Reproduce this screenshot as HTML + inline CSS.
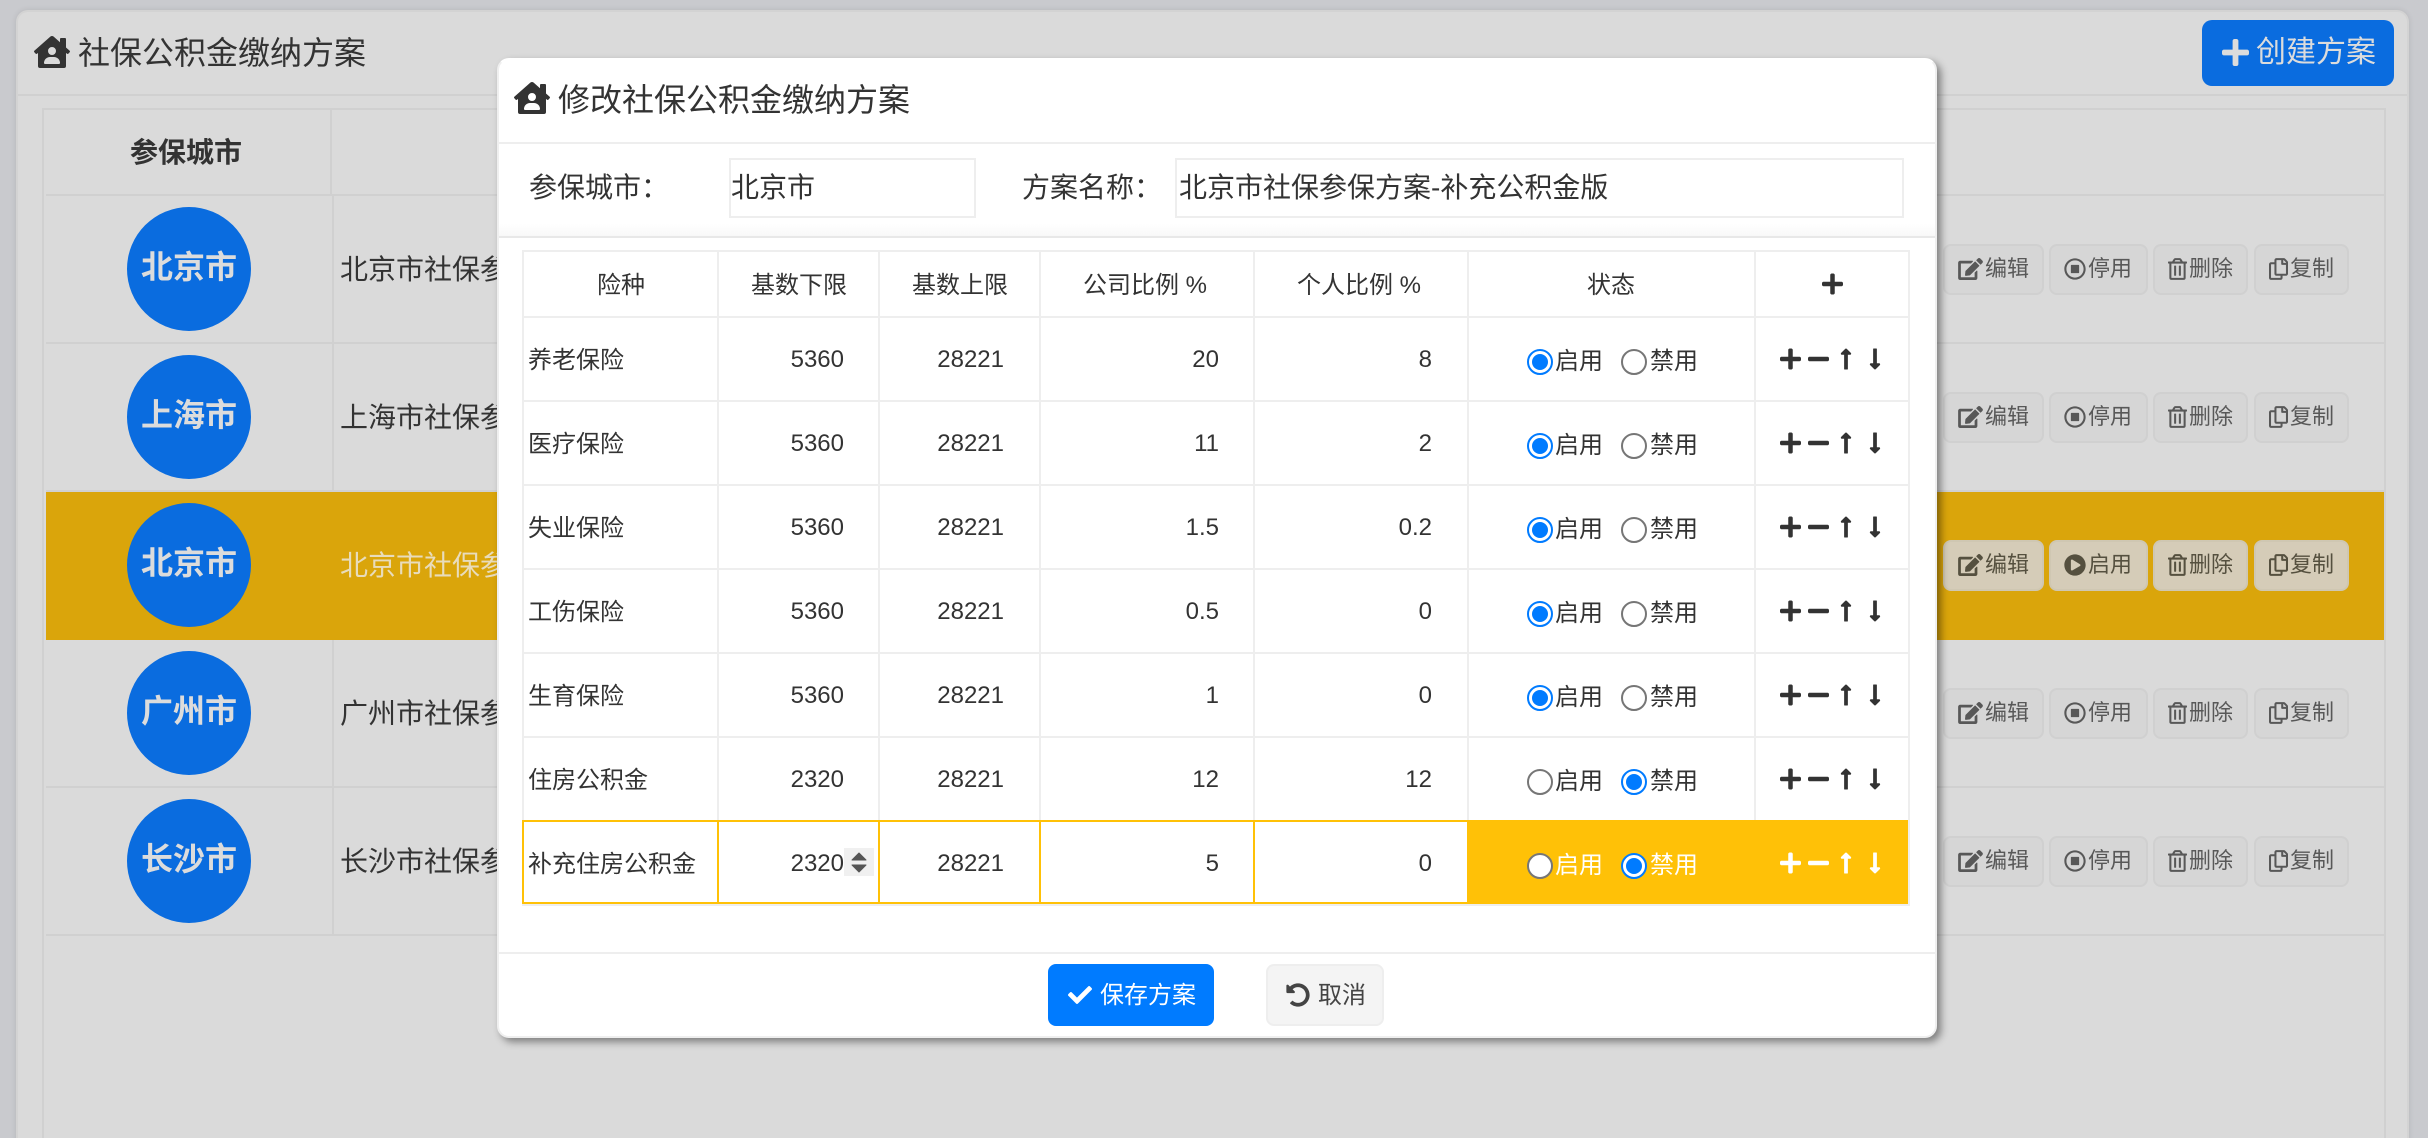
<!DOCTYPE html>
<html lang="zh"><head><meta charset="utf-8"><title>社保公积金缴纳方案</title>
<style>
html,body{margin:0;padding:0;width:2428px;height:1138px;overflow:hidden;background:#c9cace}
body{position:relative;font-family:"Liberation Sans","Noto Sans CJK SC",sans-serif;color:#333}
div,span,svg{position:absolute;box-sizing:border-box}
.t{white-space:nowrap;line-height:1}
.l{background:#d0d0d0}.m{background:#eee}
.y{background:#ffc107}
#panel{left:18px;top:12px;width:2389px;height:1140px;background:#dadada;border-radius:10px 10px 0 0;box-shadow:0 0 0 2px #d3d3d3,0 0 6px 2px rgba(0,0,0,.1)}
#modal{left:497px;top:58px;width:1440px;height:980px;background:#fff;border-radius:12px;border:2px solid #efefef;border-top-color:#fff;box-shadow:4px 4px 8px rgba(0,0,0,.42)}
.c{width:124px;height:124px;left:127px;border-radius:50%;background:#0a6cdf}
.ct{left:141px;width:96px;font-size:32px;font-weight:bold;color:#dcdcdc;text-align:center}
.rt{left:340px;font-size:28px;color:#333}
.b{top:0;height:51px;background:#d6d6d6;border:2px solid #d0d0d0;border-radius:8px}
.bt{top:14px;font-size:22px;color:#585858}
.ic{fill:#585858;top:14px;height:22px}
.ye .b{background:#d5ccb8;border-color:#cfc7b2}.ye .bt{color:#55503f}.ye .ic{fill:#55503f}
.h{top:274px;font-size:24px;color:#333}
.r{left:0;width:0;height:0}
.n{top:33px;left:528px;font-size:24px}
.d{top:32px;width:100px;text-align:right;font-size:24px}
.a{left:744px}.e{left:904px}.f{left:1119px}.g{left:1332px}
.o{top:33px;width:26px;height:26px;border-radius:50%;background:#fff;border:2px solid #767676}
.k{border-color:#007bff}.k:after{content:"";position:absolute;left:3px;top:3px;width:16px;height:16px;border-radius:50%;background:#007bff}
.o1{left:1527px}.o2{left:1621px}
.x{top:34px;font-size:24px}.x1{left:1555px}.x2{left:1650px}
.i{top:31px;height:24px;fill:#333}
.i1{left:1780px;width:21px}.i2{left:1808px;width:21px}.i3{left:1840px;width:12px}.i4{left:1869px;width:12px}
.w .x{color:#fff}.w .i{fill:#fff}
</style></head><body>
<svg width="0" height="0" style="left:0;top:0">
<symbol id="house" viewBox="0 0 576 512"><path d="M570.69,236.27,512,184.44V48a16,16,0,0,0-16-16H432a16,16,0,0,0-16,16V99.67L314.78,10.3C308.5,4.61,296.53,0,288,0s-20.46,4.61-26.74,10.3l-256,226A18.27,18.27,0,0,0,0,248.2a18.64,18.64,0,0,0,4.09,10.71L25.5,282.7a21.14,21.14,0,0,0,12,5.3,21.67,21.67,0,0,0,10.69-4.11l15.9-14V480a32,32,0,0,0,32,32H480a32,32,0,0,0,32-32V269.88l15.91,14A21.94,21.94,0,0,0,538.63,288a20.89,20.89,0,0,0,11.87-5.31l21.41-23.81A21.64,21.64,0,0,0,576,248.19,21,21,0,0,0,570.69,236.27ZM288,176a64,64,0,1,1-64,64A64,64,0,0,1,288,176ZM400,448H176a16,16,0,0,1-16-16,96,96,0,0,1,96-96h64a96,96,0,0,1,96,96A16,16,0,0,1,400,448Z"/></symbol>
<symbol id="plus" viewBox="0 0 448 512"><path d="M416 208H272V64c0-17.67-14.33-32-32-32h-32c-17.67 0-32 14.33-32 32v144H32c-17.67 0-32 14.33-32 32v32c0 17.67 14.33 32 32 32h144v144c0 17.67 14.33 32 32 32h32c17.67 0 32-14.33 32-32V304h144c17.67 0 32-14.33 32-32v-32c0-17.67-14.33-32-32-32z"/></symbol>
<symbol id="minus" viewBox="0 0 448 512"><path d="M416 208H32c-17.67 0-32 14.33-32 32v32c0 17.67 14.33 32 32 32h384c17.67 0 32-14.33 32-32v-32c0-17.67-14.33-32-32-32z"/></symbol>
<symbol id="up" viewBox="0 0 256 512"><path d="M88 166.059V468c0 6.627 5.373 12 12 12h56c6.627 0 12-5.373 12-12V166.059h46.059c21.382 0 32.09-25.851 16.971-40.971l-86.059-86.059c-9.373-9.373-24.569-9.373-33.941 0l-86.059 86.059c-15.119 15.119-4.411 40.971 16.971 40.971H88z"/></symbol>
<symbol id="down" viewBox="0 0 256 512"><path d="M168 345.941V44c0-6.627-5.373-12-12-12h-56c-6.627 0-12 5.373-12 12v301.941H41.941c-21.382 0-32.09 25.851-16.971 40.971l86.059 86.059c9.373 9.373 24.569 9.373 33.941 0l86.059-86.059c15.119-15.119 4.411-40.971-16.971-40.971H168z"/></symbol>
<symbol id="check" viewBox="0 0 512 512"><path d="M173.898 439.404l-166.4-166.4c-9.997-9.997-9.997-26.206 0-36.204l36.203-36.204c9.997-9.998 26.207-9.998 36.204 0L192 312.69 432.095 72.596c9.997-9.997 26.207-9.997 36.204 0l36.203 36.204c9.997 9.997 9.997 26.206 0 36.204l-294.4 294.401c-9.998 9.997-26.207 9.997-36.204-.001z"/></symbol>
<symbol id="undo" viewBox="0 0 512 512"><path d="M255.545 8c-66.269.119-126.438 26.233-170.86 68.685L48.971 40.971C33.851 25.851 8 36.559 8 57.941V192c0 13.255 10.745 24 24 24h134.059c21.382 0 32.09-25.851 16.971-40.971l-41.75-41.75c30.864-28.899 70.801-44.907 113.23-45.273 92.398-.798 170.283 73.977 169.484 169.442C423.236 348.009 349.816 424 256 424c-41.127 0-79.997-14.678-110.63-41.556-4.743-4.161-11.906-3.908-16.368.553L89.34 422.659c-4.872 4.872-4.631 12.815.482 17.433C133.798 479.813 192.074 504 256 504c136.966 0 247.999-111.033 248-247.998C504.001 119.193 392.354 7.755 255.545 8z"/></symbol>
<symbol id="edit" viewBox="0 0 576 512"><path d="M402.6 83.2l90.2 90.2c3.8 3.8 3.8 10 0 13.8L274.4 405.6l-92.8 10.3c-12.4 1.4-22.9-9.1-21.5-21.5l10.3-92.8L388.8 83.2c3.8-3.8 10-3.8 13.8 0zm162-22.9l-48.8-48.8c-15.2-15.2-39.9-15.2-55.2 0l-35.4 35.4c-3.8 3.8-3.8 10 0 13.8l90.2 90.2c3.8 3.8 10 3.8 13.8 0l35.4-35.4c15.2-15.3 15.2-40 0-55.2zM384 346.2V448H64V128h229.8c3.2 0 6.2-1.3 8.5-3.5l40-40c7.6-7.6 2.2-20.5-8.5-20.5H48C21.5 64 0 85.5 0 112v352c0 26.5 21.5 48 48 48h352c26.5 0 48-21.5 48-48V306.2c0-10.7-12.9-16-20.5-8.5l-40 40c-2.2 2.3-3.5 5.3-3.5 8.5z"/></symbol>
<symbol id="stop" viewBox="0 0 512 512"><path d="M504 256C504 119 393 8 256 8S8 119 8 256s111 248 248 248 248-111 248-248zm-448 0c0-110.5 89.5-200 200-200s200 89.5 200 200-89.5 200-200 200S56 366.5 56 256zm296-80v160c0 8.8-7.2 16-16 16H176c-8.8 0-16-7.2-16-16V176c0-8.8 7.2-16 16-16h160c8.8 0 16 7.2 16 16z"/></symbol>
<symbol id="play" viewBox="0 0 512 512"><path d="M256 8C119 8 8 119 8 256s111 248 248 248 248-111 248-248S393 8 256 8zm115.7 272l-176 101c-15.8 8.8-35.7-2.5-35.7-21V152c0-18.4 19.8-29.8 35.7-21l176 107c16.4 9.2 16.4 32.9 0 42z"/></symbol>
<symbol id="trash" viewBox="0 0 448 512"><path d="M268 416h24a12 12 0 0 0 12-12V188a12 12 0 0 0-12-12h-24a12 12 0 0 0-12 12v216a12 12 0 0 0 12 12zM432 80h-82.41l-34-56.7A48 48 0 0 0 274.41 0H173.59a48 48 0 0 0-41.16 23.3L98.41 80H16A16 16 0 0 0 0 96v16a16 16 0 0 0 16 16h16v336a48 48 0 0 0 48 48h288a48 48 0 0 0 48-48V128h16a16 16 0 0 0 16-16V96a16 16 0 0 0-16-16zM171.84 50.91A6 6 0 0 1 177 48h94a6 6 0 0 1 5.15 2.91L293.61 80H154.39zM368 464H80V128h288zm-212-48h24a12 12 0 0 0 12-12V188a12 12 0 0 0-12-12h-24a12 12 0 0 0-12 12v216a12 12 0 0 0 12 12z"/></symbol>
<symbol id="copy" viewBox="0 0 448 512"><path d="M433.941 65.941l-51.882-51.882A48 48 0 0 0 348.118 0H176c-26.51 0-48 21.49-48 48v48H48c-26.51 0-48 21.49-48 48v320c0 26.51 21.49 48 48 48h224c26.51 0 48-21.49 48-48v-48h80c26.51 0 48-21.49 48-48V99.882a48 48 0 0 0-14.059-33.941zM266 464H54a6 6 0 0 1-6-6V150a6 6 0 0 1 6-6h74v224c0 26.51 21.49 48 48 48h96v42a6 6 0 0 1-6 6zm128-96H182a6 6 0 0 1-6-6V54a6 6 0 0 1 6-6h106v88c0 13.255 10.745 24 24 24h88v202a6 6 0 0 1-6 6zm6-256h-64V48h9.632c1.591 0 3.117.632 4.243 1.757l48.368 48.368a6 6 0 0 1 1.757 4.243V112z"/></symbol>
</svg>

<div id="panel"></div>
<div class="l" style="left:18px;top:94px;width:2389px;height:2px"></div>
<svg style="left:34px;top:36px;width:36px;height:32px;fill:#333"><use href="#house"/></svg>
<div class="t" style="left:78px;top:37px;font-size:32px">社保公积金缴纳方案</div>
<div style="left:2202px;top:20px;width:192px;height:66px;background:#0a6cdf;border-radius:10px"></div>
<svg style="left:2222px;top:37px;width:27px;height:31px;fill:#dcdcdc"><use href="#plus"/></svg>
<div class="t" style="left:2256px;top:38px;font-size:30px;color:#dcdcdc">创建方案</div>

<!-- background table -->
<div class="l" style="left:42px;top:108px;width:2px;height:1030px"></div>
<div class="l" style="left:2384px;top:108px;width:2px;height:1030px"></div>
<div class="l" style="left:42px;top:108px;width:2344px;height:2px"></div>
<div class="l" style="left:330px;top:108px;width:2px;height:86px"></div>
<div class="l" style="left:332px;top:196px;width:2px;height:740px"></div>
<div class="l" style="left:46px;top:194px;width:2338px;height:2px"></div>
<div class="l" style="left:46px;top:342px;width:2338px;height:2px"></div>
<div class="l" style="left:46px;top:490px;width:2338px;height:2px"></div>
<div class="l" style="left:46px;top:638px;width:2338px;height:2px"></div>
<div class="l" style="left:46px;top:786px;width:2338px;height:2px"></div>
<div class="l" style="left:46px;top:934px;width:2338px;height:2px"></div>
<div style="left:46px;top:492px;width:2338px;height:148px;background:#daa50b"></div>
<div class="t" style="left:130px;top:139px;font-size:28px;font-weight:bold;color:#333">参保城市</div>

<div class="c" style="top:207px"></div><div class="t ct" style="top:251px">北京市</div><div class="t rt" style="top:256px">北京市社保参保方案</div>
<div class="c" style="top:355px"></div><div class="t ct" style="top:399px">上海市</div><div class="t rt" style="top:404px">上海市社保参保方案</div>
<div class="c" style="top:503px"></div><div class="t ct" style="top:547px">北京市</div><div class="t rt" style="top:552px;color:#e8dcbc">北京市社保参保方案</div>
<div class="c" style="top:651px"></div><div class="t ct" style="top:695px">广州市</div><div class="t rt" style="top:700px">广州市社保参保方案</div>
<div class="c" style="top:799px"></div><div class="t ct" style="top:843px">长沙市</div><div class="t rt" style="top:848px">长沙市社保参保方案</div>

<div class="r" style="top:244px">
<div class="b" style="left:1943px;width:101px"></div><svg class="ic" style="left:1958px;width:25px"><use href="#edit"/></svg><div class="t bt" style="left:1985px">编辑</div>
<div class="b" style="left:2049px;width:99px"></div><svg class="ic" style="left:2064px;width:22px"><use href="#stop"/></svg><div class="t bt" style="left:2088px">停用</div>
<div class="b" style="left:2153px;width:95px"></div><svg class="ic" style="left:2168px;width:19px"><use href="#trash"/></svg><div class="t bt" style="left:2189px">删除</div>
<div class="b" style="left:2254px;width:95px"></div><svg class="ic" style="left:2269px;width:19px"><use href="#copy"/></svg><div class="t bt" style="left:2290px">复制</div>
</div>
<div class="r" style="top:392px">
<div class="b" style="left:1943px;width:101px"></div><svg class="ic" style="left:1958px;width:25px"><use href="#edit"/></svg><div class="t bt" style="left:1985px">编辑</div>
<div class="b" style="left:2049px;width:99px"></div><svg class="ic" style="left:2064px;width:22px"><use href="#stop"/></svg><div class="t bt" style="left:2088px">停用</div>
<div class="b" style="left:2153px;width:95px"></div><svg class="ic" style="left:2168px;width:19px"><use href="#trash"/></svg><div class="t bt" style="left:2189px">删除</div>
<div class="b" style="left:2254px;width:95px"></div><svg class="ic" style="left:2269px;width:19px"><use href="#copy"/></svg><div class="t bt" style="left:2290px">复制</div>
</div>
<div class="r ye" style="top:540px">
<div class="b" style="left:1943px;width:101px"></div><svg class="ic" style="left:1958px;width:25px"><use href="#edit"/></svg><div class="t bt" style="left:1985px">编辑</div>
<div class="b" style="left:2049px;width:99px"></div><svg class="ic" style="left:2064px;width:22px"><use href="#play"/></svg><div class="t bt" style="left:2088px">启用</div>
<div class="b" style="left:2153px;width:95px"></div><svg class="ic" style="left:2168px;width:19px"><use href="#trash"/></svg><div class="t bt" style="left:2189px">删除</div>
<div class="b" style="left:2254px;width:95px"></div><svg class="ic" style="left:2269px;width:19px"><use href="#copy"/></svg><div class="t bt" style="left:2290px">复制</div>
</div>
<div class="r" style="top:688px">
<div class="b" style="left:1943px;width:101px"></div><svg class="ic" style="left:1958px;width:25px"><use href="#edit"/></svg><div class="t bt" style="left:1985px">编辑</div>
<div class="b" style="left:2049px;width:99px"></div><svg class="ic" style="left:2064px;width:22px"><use href="#stop"/></svg><div class="t bt" style="left:2088px">停用</div>
<div class="b" style="left:2153px;width:95px"></div><svg class="ic" style="left:2168px;width:19px"><use href="#trash"/></svg><div class="t bt" style="left:2189px">删除</div>
<div class="b" style="left:2254px;width:95px"></div><svg class="ic" style="left:2269px;width:19px"><use href="#copy"/></svg><div class="t bt" style="left:2290px">复制</div>
</div>
<div class="r" style="top:836px">
<div class="b" style="left:1943px;width:101px"></div><svg class="ic" style="left:1958px;width:25px"><use href="#edit"/></svg><div class="t bt" style="left:1985px">编辑</div>
<div class="b" style="left:2049px;width:99px"></div><svg class="ic" style="left:2064px;width:22px"><use href="#stop"/></svg><div class="t bt" style="left:2088px">停用</div>
<div class="b" style="left:2153px;width:95px"></div><svg class="ic" style="left:2168px;width:19px"><use href="#trash"/></svg><div class="t bt" style="left:2189px">删除</div>
<div class="b" style="left:2254px;width:95px"></div><svg class="ic" style="left:2269px;width:19px"><use href="#copy"/></svg><div class="t bt" style="left:2290px">复制</div>
</div>

<!-- modal -->
<div id="modal"></div>
<svg style="left:514px;top:82px;width:36px;height:32px;fill:#333"><use href="#house"/></svg>
<div class="t" style="left:558px;top:84px;font-size:32px">修改社保公积金缴纳方案</div>
<div class="m" style="left:499px;top:142px;width:1436px;height:2px"></div>
<div class="t" style="left:529px;top:174px;font-size:28px">参保城市：</div>
<div style="left:729px;top:158px;width:247px;height:60px;border:2px solid #eee"></div>
<div class="t" style="left:731px;top:174px;font-size:28px">北京市</div>
<div class="t" style="left:1022px;top:174px;font-size:28px">方案名称：</div>
<div style="left:1175px;top:158px;width:729px;height:60px;border:2px solid #eee"></div>
<div class="t" style="left:1179px;top:174px;font-size:28px">北京市社保参保方案-补充公积金版</div>
<div style="left:499px;top:224px;width:1436px;height:12px;background:linear-gradient(#fff,#f8f8f8)"></div>
<div style="left:499px;top:236px;width:1436px;height:2px;background:#e8e8e8"></div>

<!-- modal table lines -->
<div class="m" style="left:522px;top:250px;width:1388px;height:2px"></div>
<div class="m" style="left:522px;top:316px;width:1388px;height:2px"></div>
<div class="m" style="left:522px;top:400px;width:1388px;height:2px"></div>
<div class="m" style="left:522px;top:484px;width:1388px;height:2px"></div>
<div class="m" style="left:522px;top:568px;width:1388px;height:2px"></div>
<div class="m" style="left:522px;top:652px;width:1388px;height:2px"></div>
<div class="m" style="left:522px;top:736px;width:1388px;height:2px"></div>
<div class="m" style="left:522px;top:904px;width:1388px;height:2px"></div>
<div class="m" style="left:522px;top:250px;width:2px;height:656px"></div>
<div class="m" style="left:717px;top:250px;width:2px;height:570px"></div>
<div class="m" style="left:878px;top:250px;width:2px;height:570px"></div>
<div class="m" style="left:1039px;top:250px;width:2px;height:570px"></div>
<div class="m" style="left:1253px;top:250px;width:2px;height:570px"></div>
<div class="m" style="left:1467px;top:250px;width:2px;height:570px"></div>
<div class="m" style="left:1754px;top:250px;width:2px;height:570px"></div>
<div class="m" style="left:1908px;top:250px;width:2px;height:656px"></div>

<div class="t h" style="left:597px">险种</div>
<div class="t h" style="left:751px">基数下限</div>
<div class="t h" style="left:912px">基数上限</div>
<div class="t h" style="left:1083px">公司比例 %</div>
<div class="t h" style="left:1297px">个人比例 %</div>
<div class="t h" style="left:1587px">状态</div>
<svg class="i" style="left:1822px;top:272px;width:21px"><use href="#plus"/></svg>

<div class="r" style="top:316px"><div class="t n">养老保险</div><div class="t d a">5360</div><div class="t d e">28221</div><div class="t d f">20</div><div class="t d g">8</div><div class="o o1 k"></div><div class="t x x1">启用</div><div class="o o2"></div><div class="t x x2">禁用</div><svg class="i i1"><use href="#plus"/></svg><svg class="i i2"><use href="#minus"/></svg><svg class="i i3"><use href="#up"/></svg><svg class="i i4"><use href="#down"/></svg></div>
<div class="r" style="top:400px"><div class="t n">医疗保险</div><div class="t d a">5360</div><div class="t d e">28221</div><div class="t d f">11</div><div class="t d g">2</div><div class="o o1 k"></div><div class="t x x1">启用</div><div class="o o2"></div><div class="t x x2">禁用</div><svg class="i i1"><use href="#plus"/></svg><svg class="i i2"><use href="#minus"/></svg><svg class="i i3"><use href="#up"/></svg><svg class="i i4"><use href="#down"/></svg></div>
<div class="r" style="top:484px"><div class="t n">失业保险</div><div class="t d a">5360</div><div class="t d e">28221</div><div class="t d f">1.5</div><div class="t d g">0.2</div><div class="o o1 k"></div><div class="t x x1">启用</div><div class="o o2"></div><div class="t x x2">禁用</div><svg class="i i1"><use href="#plus"/></svg><svg class="i i2"><use href="#minus"/></svg><svg class="i i3"><use href="#up"/></svg><svg class="i i4"><use href="#down"/></svg></div>
<div class="r" style="top:568px"><div class="t n">工伤保险</div><div class="t d a">5360</div><div class="t d e">28221</div><div class="t d f">0.5</div><div class="t d g">0</div><div class="o o1 k"></div><div class="t x x1">启用</div><div class="o o2"></div><div class="t x x2">禁用</div><svg class="i i1"><use href="#plus"/></svg><svg class="i i2"><use href="#minus"/></svg><svg class="i i3"><use href="#up"/></svg><svg class="i i4"><use href="#down"/></svg></div>
<div class="r" style="top:652px"><div class="t n">生育保险</div><div class="t d a">5360</div><div class="t d e">28221</div><div class="t d f">1</div><div class="t d g">0</div><div class="o o1 k"></div><div class="t x x1">启用</div><div class="o o2"></div><div class="t x x2">禁用</div><svg class="i i1"><use href="#plus"/></svg><svg class="i i2"><use href="#minus"/></svg><svg class="i i3"><use href="#up"/></svg><svg class="i i4"><use href="#down"/></svg></div>
<div class="r" style="top:736px"><div class="t n">住房公积金</div><div class="t d a">2320</div><div class="t d e">28221</div><div class="t d f">12</div><div class="t d g">12</div><div class="o o1"></div><div class="t x x1">启用</div><div class="o o2 k"></div><div class="t x x2">禁用</div><svg class="i i1"><use href="#plus"/></svg><svg class="i i2"><use href="#minus"/></svg><svg class="i i3"><use href="#up"/></svg><svg class="i i4"><use href="#down"/></svg></div>

<!-- selected row -->
<div class="y" style="left:522px;top:820px;width:1386px;height:2px"></div>
<div class="y" style="left:522px;top:902px;width:1386px;height:2px"></div>
<div class="y" style="left:522px;top:820px;width:2px;height:84px"></div>
<div class="y" style="left:717px;top:820px;width:2px;height:84px"></div>
<div class="y" style="left:878px;top:820px;width:2px;height:84px"></div>
<div class="y" style="left:1039px;top:820px;width:2px;height:84px"></div>
<div class="y" style="left:1253px;top:820px;width:2px;height:84px"></div>
<div class="y" style="left:1467px;top:820px;width:441px;height:84px"></div>
<div class="r w" style="top:820px"><div class="t n">补充住房公积金</div><div class="t d a">2320</div><div class="t d e">28221</div><div class="t d f">5</div><div class="t d g">0</div><div class="o o1"></div><div class="t x x1">启用</div><div class="o o2 k"></div><div class="t x x2">禁用</div><svg class="i i1"><use href="#plus"/></svg><svg class="i i2"><use href="#minus"/></svg><svg class="i i3"><use href="#up"/></svg><svg class="i i4"><use href="#down"/></svg></div>
<svg style="left:844px;top:848px;width:30px;height:28px"><rect width="30" height="28" fill="#f0f0f0"/><path d="M8 12 L15 5 L22 12 Z M8 17 L22 17 L15 24 Z" fill="#555" stroke="#555" stroke-width="1" stroke-linejoin="round"/></svg>

<!-- footer -->
<div class="m" style="left:499px;top:952px;width:1436px;height:2px"></div>
<div style="left:1048px;top:964px;width:166px;height:62px;background:#007bff;border-radius:8px"></div>
<svg style="left:1068px;top:983px;width:24px;height:24px;fill:#fff"><use href="#check"/></svg>
<div class="t" style="left:1100px;top:984px;font-size:24px;color:#fff">保存方案</div>
<div style="left:1266px;top:964px;width:118px;height:62px;background:#f4f4f4;border:2px solid #eee;border-radius:8px"></div>
<svg style="left:1286px;top:983px;width:24px;height:24px;fill:#444"><use href="#undo"/></svg>
<div class="t" style="left:1318px;top:984px;font-size:24px;color:#444">取消</div>
</body></html>
